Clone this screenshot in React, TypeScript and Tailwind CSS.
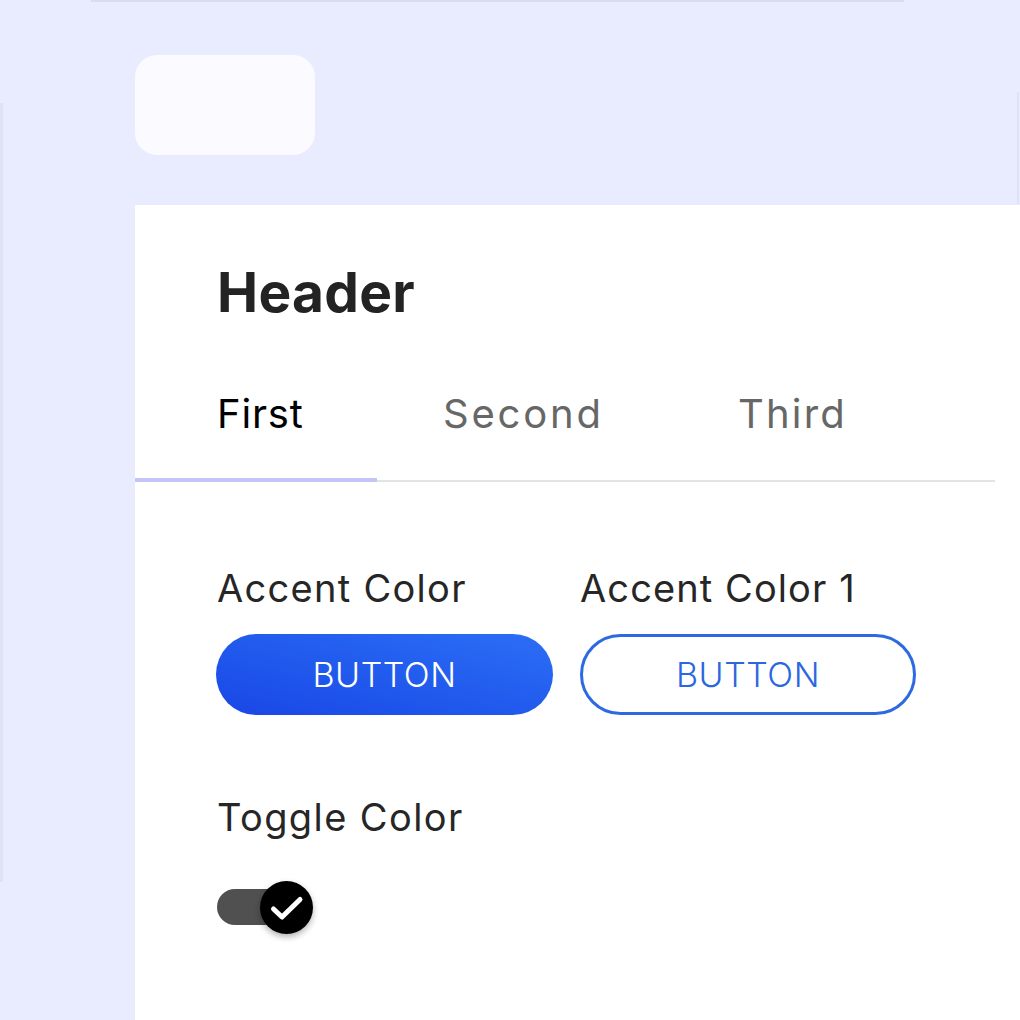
import React, { useState } from 'react';

const tabs = ['First', 'Second', 'Third'];

const CheckKnob: React.FC = () => (
  <div className="absolute left-[43px] top-[-8px] w-[53px] h-[53px] rounded-full bg-black shadow-[0_3px_6px_rgba(0,0,0,0.3)] flex items-center justify-center">
    <svg width="40" height="40" viewBox="0 0 40 40" fill="none">
      <path d="M6.5 21 L15 29 L33 11.5" stroke="white" strokeWidth="5" strokeLinecap="round" strokeLinejoin="round" />
    </svg>
  </div>
);

const App: React.FC = () => {
  const [active, setActive] = useState(0);
  const [on, setOn] = useState(true);

  return (
    <div className="relative w-[1020px] h-[1020px] overflow-hidden bg-[#e9ecfe] font-['Inter',sans-serif] flex flex-col">
      {/* faint edges of the card behind */}
      <div className="absolute left-0 top-[103px] w-[3px] h-[779px] bg-[#dfe2f4]" />
      <div className="absolute right-[1px] top-[92px] w-[2px] h-[112px] bg-[#dfe2f4]" />

      <div className="ml-[91px] w-[813px] h-[2px] bg-[#d9dcef]" />
      <div className="ml-[135px] mt-[53px] w-[180px] h-[100px] rounded-[22px] bg-[#fbfbff]" />

      <div className="ml-[135px] mt-[50px] flex-1 bg-white">
        <h1 className="pl-[82px] pt-[60px] text-[55px] leading-none font-bold text-[#232323] tracking-[0.3px]">
          Header
        </h1>

        <div className="mt-[74px] w-[860px] flex items-end border-b-2 border-[#e4e4e4]">
          {tabs.map((t, i) => (
            <button
              key={t}
              onClick={() => setActive(i)}
              className={
                (i === 0 ? 'w-[242px] pl-[82px] tracking-[0.8px] ' : i === 1 ? 'w-[361px] pl-[66px] tracking-[2.8px] ' : 'pl-[0px] tracking-[2.2px] ') +
                'text-left text-[40px] leading-none pb-[44px] -mb-[2px] border-b-4 ' +
                (i === active ? 'text-black border-[#c2c6f6]' : 'text-[#676767] border-transparent')
              }
            >
              {t}
            </button>
          ))}
        </div>

        <div className="mt-[87px] pl-[81px] flex gap-[27px]">
          <div className="w-[337px] flex flex-col">
            <span className="pl-[1px] text-[38px] leading-none text-[#262626] tracking-[1.3px]">Accent Color</span>
            <button className="mt-[27px] h-[81px] rounded-full bg-gradient-to-tr from-[#1a46e6] to-[#2c6ef5] text-white text-[34px] font-light tracking-[0.5px]">
              BUTTON
            </button>
          </div>
          <div className="w-[336px] flex flex-col">
            <span className="pl-[0px] text-[38px] leading-none text-[#262626] tracking-[1.1px]">Accent Color 1</span>
            <button className="mt-[27px] h-[81px] rounded-full border-[3px] border-[#2d6ae2] text-[#2a67e0] text-[34px] font-light tracking-[0.5px]">
              BUTTON
            </button>
          </div>
        </div>

        <div className="mt-[83px] pl-[82px] flex flex-col">
          <span className="text-[38px] leading-none text-[#262626] tracking-[1.4px]">Toggle Color</span>
          <button
            onClick={() => setOn(!on)}
            className="relative mt-[53px] w-[80px] h-[36px] rounded-full bg-[#505050]"
          >
            {on && <CheckKnob />}
          </button>
        </div>
      </div>
    </div>
  );
};

export default App;
